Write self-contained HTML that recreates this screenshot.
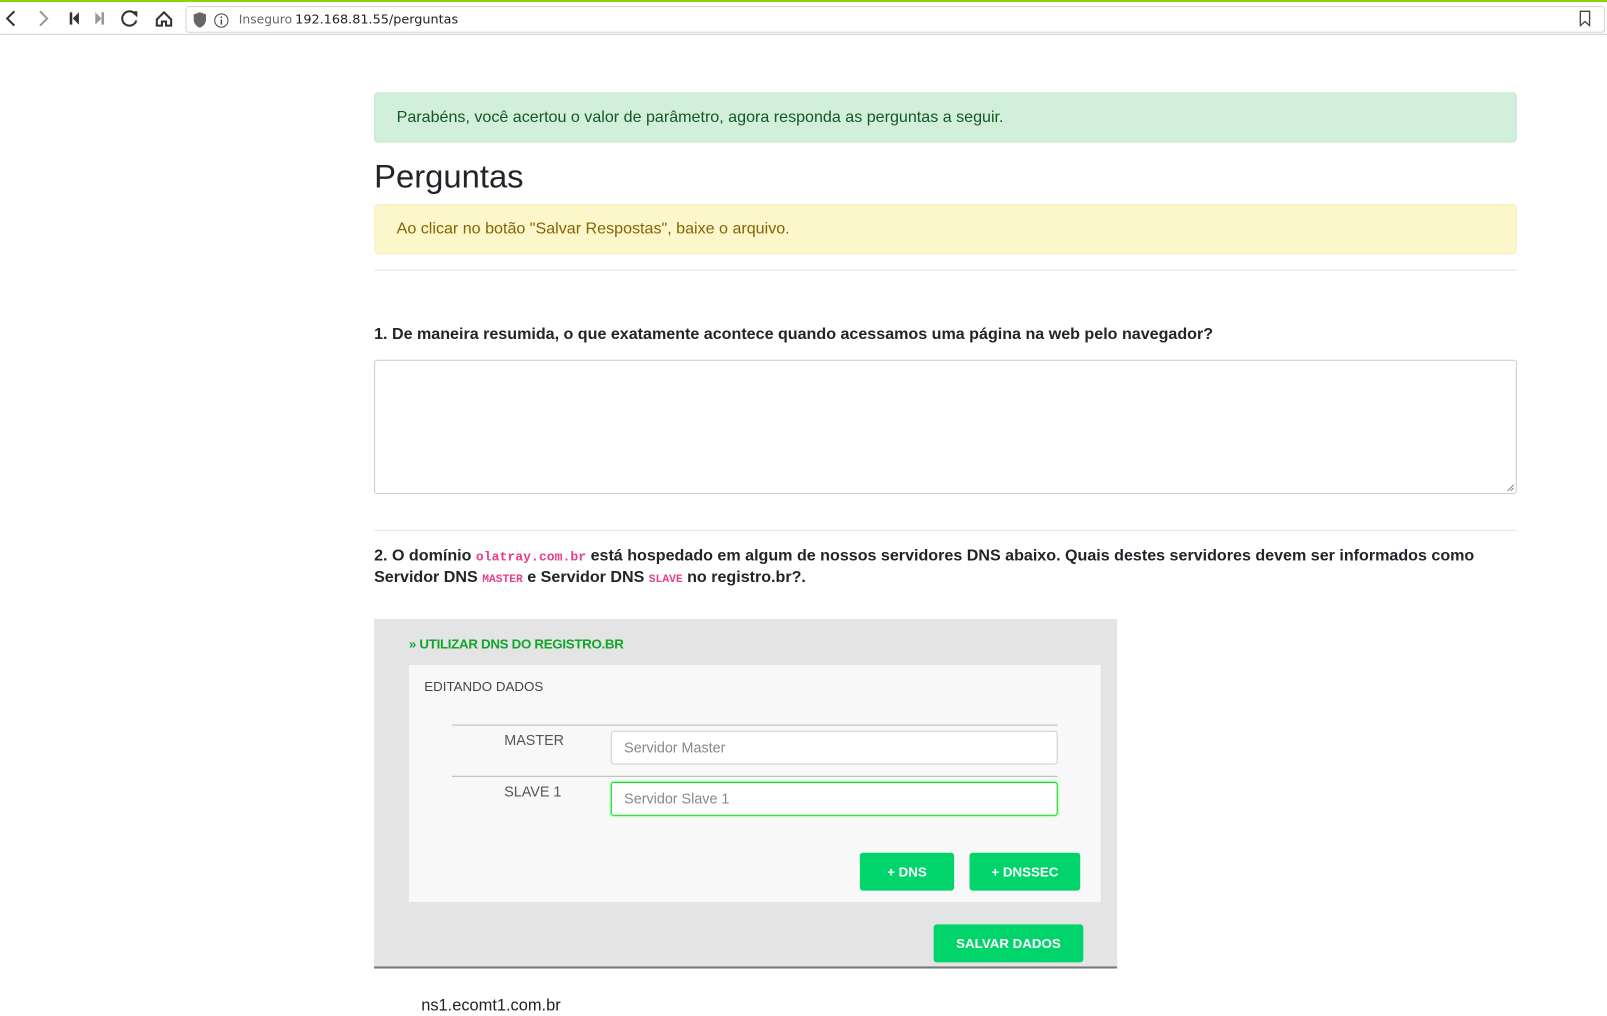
<!DOCTYPE html>
<html><head><meta charset="utf-8"><style>
*{box-sizing:border-box;margin:0;padding:0}
body{width:1607px;height:1012px;overflow:hidden;background:#fff;font-family:"Liberation Sans",Arial,sans-serif;position:relative}
#w{position:absolute;left:0;top:0;width:1568px;height:988px;transform:scale(1.02487);transform-origin:0 0}
.bar{position:absolute;left:0;top:0;width:1568px;height:34px;background:#fff;border-top:2px solid #8cd40a;border-bottom:1px solid #cfcfcf}
.url{position:absolute;left:181px;top:4px;width:1385px;height:26px;border:1px solid #d4d4d4;border-radius:3px;background:#fff}
.abs{position:absolute}
.alert{position:absolute;left:365px;width:1115px;height:49px;border-radius:4px;font-size:15.7px;padding-left:21px;line-height:47px}
.q{position:absolute;left:365px;font-weight:bold;font-size:15.7px;color:#212529;line-height:20px}
code{font-family:"Liberation Mono",monospace;color:#e83e8c;font-size:12.8px;font-weight:bold}
.btn{position:absolute;background:#00d46a;color:#fff;font-weight:bold;font-size:13px;text-align:center;border-radius:3px}
.inp{position:absolute;left:596px;width:436px;height:33px;border:1px solid #ccc;border-radius:3px;background:#fff;font-size:14px;color:#888;padding-left:12px;line-height:31px}
</style></head><body><div id="w">
<div class="bar">
<svg class="abs" style="left:0;top:0" width="180" height="32" viewBox="0 0 180 32">
<path d="M14 9l-7 7 7 7" fill="none" stroke="#333" stroke-width="2"/>
<path d="M39 9l7 7-7 7" fill="none" stroke="#999" stroke-width="2"/>
<rect x="68" y="10" width="2.5" height="12" fill="#333"/><path d="M77 10v12l-6-6z" fill="#333"/>
<path d="M93 10v12l6-6z" fill="#999"/><rect x="99" y="10" width="2.5" height="12" fill="#999"/>
<path d="M132 12a7 7 0 1 0 1 6" fill="none" stroke="#333" stroke-width="2"/><path d="M128 9h6v6z" fill="#333"/>
<path d="M153 17l7-7 7 7v6h-5v-4h-4v4h-5z" fill="none" stroke="#333" stroke-width="2"/>
</svg>
<div class="url">
<svg class="abs" style="left:5px;top:4px" width="50" height="18"><path d="M2 3l6-2 6 2v5c0 4-3 7-6 8-3-1-6-4-6-8z" fill="#666"/><circle cx="29" cy="9" r="6.5" fill="none" stroke="#444"/><rect x="28.3" y="8" width="1.4" height="5" fill="#444"/><rect x="28.3" y="5" width="1.4" height="1.5" fill="#444"/></svg>
<span class="abs" style="left:51px;top:5px;font-size:12px;color:#666;font-family:'DejaVu Sans',sans-serif">Inseguro</span>
<span class="abs" style="left:106px;top:4px;font-size:12.5px;color:#222;font-family:'DejaVu Sans',sans-serif">192.168.81.55/perguntas</span>
</div>
<svg class="abs" style="left:1540px;top:8px" width="14" height="16"><path d="M2 1h9v14l-4.5-4-4.5 4z" fill="none" stroke="#444" stroke-width="1.3"/></svg>
</div>

<div class="alert" style="top:90px;background:#d1efdb;border:1px solid #c0e8cc;color:#155724">Parabéns, você acertou o valor de parâmetro, agora responda as perguntas a seguir.</div>
<div class="abs" style="left:365px;top:154px;font-size:32px;color:#212529">Perguntas</div>
<div class="alert" style="top:199px;background:#fcf7ca;border:1px solid #f8f0b8;color:#856404">Ao clicar no botão "Salvar Respostas", baixe o arquivo.</div>
<div class="abs" style="left:365px;top:263px;width:1115px;height:1px;background:#e5e5e5"></div>

<div class="q" style="top:317px">1. De maneira resumida, o que exatamente acontece quando acessamos uma página na web pelo navegador?</div>
<div class="abs" style="left:365px;top:351px;width:1115px;height:131px;border:1px solid #ccc;border-radius:3px"><svg class="abs" style="right:1px;bottom:1px" width="8" height="8"><path d="M7 1L1 7M7 4L4 7" stroke="#888"/></svg></div>
<div class="abs" style="left:365px;top:517px;width:1115px;height:1px;background:#e5e5e5"></div>

<div class="q" style="top:533px">2. O domínio <code>olatray.com.br</code> está hospedado em algum de nossos servidores DNS abaixo. Quais destes servidores devem ser informados como<br>Servidor DNS <code style="font-size:11px">MASTER</code> e Servidor DNS <code style="font-size:11px">SLAVE</code> no registro.br?.</div>

<div class="abs" style="left:365px;top:604px;width:725px;height:341px;background:#e4e4e4;border-bottom:2px solid #777"></div>
<div class="abs" style="left:399px;top:621px;font-size:13px;color:#12a52a;font-weight:bold;letter-spacing:-0.3px">» UTILIZAR DNS DO REGISTRO.BR</div>
<div class="abs" style="left:399px;top:649px;width:675px;height:231px;background:#f8f8f8"></div>
<div class="abs" style="left:414px;top:662px;font-size:13px;color:#444">EDITANDO DADOS</div>
<div class="abs" style="left:441px;top:707px;width:591px;height:1px;background:#bbb"></div>
<div class="abs" style="left:492px;top:714px;font-size:14px;color:#555">MASTER</div>
<div class="inp" style="top:713px">Servidor Master</div>
<div class="abs" style="left:441px;top:757px;width:591px;height:1px;background:#bbb"></div>
<div class="abs" style="left:492px;top:764px;font-size:14px;color:#555">SLAVE 1</div>
<div class="inp" style="top:763px;border:1px solid #1ed33a;box-shadow:0 0 2px #5f5">Servidor Slave 1</div>
<div class="btn" style="left:839px;top:832px;width:92px;height:37px;line-height:37px">+ DNS</div>
<div class="btn" style="left:946px;top:832px;width:108px;height:37px;line-height:37px">+ DNSSEC</div>
<div class="btn" style="left:911px;top:902px;width:146px;height:37px;line-height:37px">SALVAR DADOS</div>
<div class="abs" style="left:411px;top:973px;font-size:16px;color:#222">ns1.ecomt1.com.br</div>
</div></body></html>
